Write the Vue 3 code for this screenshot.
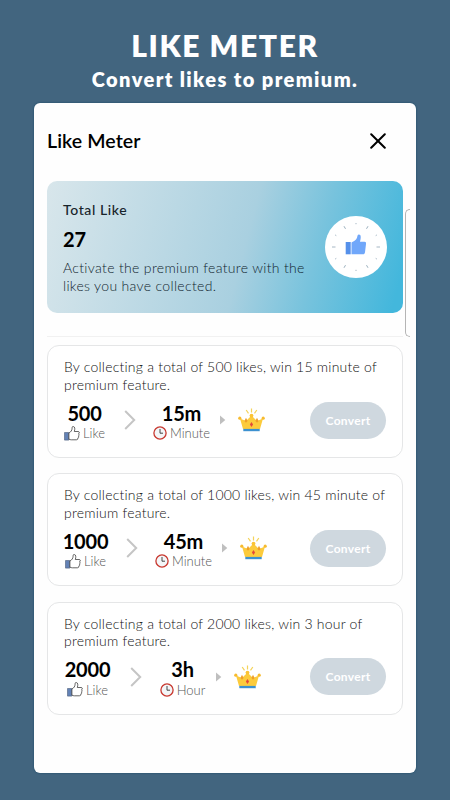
<template>
  <div class="page">
    <header class="headline">
      <h1>LIKE METER</h1>
      <p>Convert likes to premium.</p>
    </header>

    <main class="panel">
      <div class="panel-header">
        <h2>Like Meter</h2>
        <button class="close-btn" aria-label="Close">
          <svg width="16" height="16" viewBox="0 0 16 16">
            <path d="M1.2 1.2 14.8 14.8M14.8 1.2 1.2 14.8" stroke="#000" stroke-width="2" stroke-linecap="round" />
          </svg>
        </button>
      </div>

      <section class="total">
        <div class="total-info">
          <div class="total-label"><span>Total Like</span></div>
          <div class="total-count">27</div>
          <p class="total-text">Activate the premium feature with the<br />likes you have collected.</p>
        </div>
        <svg class="dial" width="62" height="62" viewBox="0 0 62 62">
          <circle cx="31" cy="31" r="31" fill="#fff" />
          <line
            v-for="n in 12"
            :key="n"
            x1="31"
            y1="7"
            x2="31"
            :y2="tickEnd(n)"
            stroke="#8fa5b5"
            stroke-width="0.8"
            :transform="`rotate(${n * 30} 31 31)`"
          />
          <path fill="#5590ea" d="M20.7 26h5v12.3h-5z" />
          <path
            fill="#70a7fa"
            d="M26.5 26.6c2.5-1.3 4.8-2.9 5.5-4.9.5-1.6.4-3.2 1.9-3.2 2.4 0 2.2 3.5 1.1 7.2h4.5c1.3 0 1.7.9 1.5 2.2L40 36.3c-.3 1.4-.8 2-2.1 2H26.5z"
          />
        </svg>
      </section>

      <div class="scroll-edge"></div>
      <div class="divider"></div>

      <section v-for="item in rewards" :key="item.likes" class="reward">
        <p class="reward-text">
          By collecting a total of {{ item.likes }} likes, win {{ item.reward }} of<br />premium feature.
        </p>
        <div class="reward-row">
          <div class="metric" :style="{ width: item.likesWidth + 'px' }">
            <strong>{{ item.likes }}</strong>
            <span class="unit">
              <svg width="16" height="15" viewBox="0 0 16 15">
                <path d="M.5 6.5h4.3v7.6H.5z" fill="#6382b6" stroke="#4b5c7b" stroke-width=".6" />
                <path
                  d="M4.9 7C7 5.9 8 4.4 8.1 2.2 8.1.8 8.5.4 9.3.5c1.7.2 1.8 2.7 1 5h3.8c1.6 0 1.6 2 .4 2.3 1.1.5.8 1.9-.2 2.2.8.7.4 1.8-.6 2 .5 1-.2 1.8-1.4 1.8H7.5c-1 0-1.8-.2-2.6-.7z"
                  fill="#fff"
                  stroke="#333"
                  stroke-width=".75"
                />
              </svg>
              Like
            </span>
          </div>
          <svg class="chevron" width="12" height="20" viewBox="0 0 12 20">
            <path d="M1.2 1 10.2 10 1.2 19" fill="none" stroke="#c5c5c5" stroke-width="2" />
          </svg>
          <div class="metric" :style="{ width: item.timeWidth + 'px' }">
            <strong>{{ item.time }}</strong>
            <span class="unit">
              <svg width="14" height="14" viewBox="0 0 14 14">
                <circle cx="7" cy="7" r="6.1" fill="#f3f6f8" stroke="#c8382f" stroke-width="1.3" />
                <path d="M7 3v4.2h3" fill="none" stroke="#333" stroke-width=".9" />
              </svg>
              {{ item.unit }}
            </span>
          </div>
          <svg class="triangle" width="6" height="10" viewBox="0 0 6 10">
            <path d="M0 .5 5.3 5 0 9.5z" fill="#bfbfbf" />
          </svg>
          <svg class="crown" width="27" height="24" viewBox="0 0 27 24">
            <path d="M13.5.5v4M8.2 2l2.3 3.3M18.8 2l-2.3 3.3" stroke="#f4d35a" stroke-width="1.2" />
            <path d="M2 10.5 8 13 13.5 7.5 19 13 25 10.5 22 21H5z" fill="#fccb3c" />
            <circle cx="1.8" cy="10.2" r="1.6" fill="#f7bb2f" />
            <circle cx="25.2" cy="10.2" r="1.6" fill="#f7bb2f" />
            <circle cx="13.5" cy="7.6" r="1.9" fill="#fbc334" />
            <path d="M8 9.8 9.6 13 8 14.8 6.4 13zM19 9.8 20.6 13 19 14.8 17.4 13z" fill="#ee9f28" />
            <path d="m13.5 14 1.6 2.5-1.6 2.5-1.6-2.5z" fill="#e34a39" />
            <path d="M5.3 20.9h16.4v2.3H5.3z" fill="#3c91d0" />
          </svg>
          <button class="convert-btn">Convert</button>
        </div>
      </section>
    </main>
  </div>
</template>

<script setup>
const rewards = [
  { likes: 500, reward: '15 minute', time: '15m', unit: 'Minute', likesWidth: 41, timeWidth: 57 },
  { likes: 1000, reward: '45 minute', time: '45m', unit: 'Minute', likesWidth: 43, timeWidth: 57 },
  { likes: 2000, reward: '3 hour', time: '3h', unit: 'Hour', likesWidth: 47, timeWidth: 47 }
]

// longer marks next to 12 and 6 o'clock and at 3 and 9
const tickEnd = (n) => {
  if (n === 3 || n === 9) return 10.5
  return [1, 5, 7, 11].includes(n) ? 10 : 8.2
}
</script>

<style>
body {
  margin: 0;
  background: #42657f;
}
</style>

<style scoped>
.page {
  box-sizing: border-box;
  height: 800px;
  padding: 0 34px;
  overflow: hidden;
  background: #42657f;
  font-family: Lato, 'Open Sans', sans-serif;
  color: #000;
}

h1,
h2,
p {
  margin: 0;
}

button {
  padding: 0;
  border: 0;
  font-family: inherit;
}

.headline {
  box-sizing: border-box;
  height: 103px;
  padding-top: 27px;
  color: #fff;
  text-align: center;
  white-space: nowrap;
}

.headline h1 {
  font-size: 30px;
  line-height: 36px;
  font-weight: 800;
  letter-spacing: 1.6px;
}

.headline p {
  padding-top: 3px;
  font-size: 20px;
  line-height: 26px;
  font-weight: 800;
  letter-spacing: 1.4px;
}

.panel {
  position: relative;
  box-sizing: border-box;
  height: 670px;
  padding: 0 13px;
  border-radius: 6px;
  background: #fefefe;
  box-shadow: 0 0 2px #174663;
}

.panel-header {
  display: flex;
  align-items: center;
  justify-content: space-between;
  height: 78px;
  padding-right: 17px;
}

.panel-header h2 {
  margin-top: -2px;
  font-size: 19.5px;
  line-height: 24px;
  font-weight: 600;
  letter-spacing: 0.1px;
}

.close-btn {
  display: flex;
  margin-top: -2px;
  background: none;
}

.total {
  display: flex;
  align-items: center;
  justify-content: space-between;
  box-sizing: border-box;
  height: 132px;
  padding: 0 16px;
  border-radius: 10px;
  background: linear-gradient(105deg, #d8e6eb 0%, #a9d0e0 55%, #78c3dd 74%, #43b7dc 97%);
}

.total-info {
  align-self: flex-start;
  padding-top: 20px;
  white-space: nowrap;
}

.total-label {
  font-size: 14px;
  line-height: 18px;
  font-weight: 500;
  letter-spacing: 0.6px;
  color: #17242b;
}

.total-count {
  padding-top: 7px;
  font-size: 20px;
  line-height: 26px;
  font-weight: 700;
}

.total-text {
  padding-top: 7px;
  font-size: 14px;
  line-height: 17.5px;
  font-weight: 300;
  letter-spacing: 0.33px;
  color: #10242e;
}

.dial {
  flex: none;
}

/* outline of the sheet peeking out on the right */
.scroll-edge {
  position: absolute;
  top: 106px;
  right: 6px;
  width: 4px;
  height: 126px;
  border: 1px solid #b5b5b5;
  border-right: 0;
  border-radius: 6px 0 0 6px;
}

.divider {
  height: 1px;
  margin: 23px 0 8px;
  background: #f1f1f1;
}

.reward {
  box-sizing: border-box;
  height: 113px;
  margin-bottom: 15.3px;
  padding: 12px 16px 0;
  border: 1px solid #e5e6e7;
  border-radius: 12px;
  background: #fff;
}

.reward-text {
  font-size: 14px;
  line-height: 17.5px;
  font-weight: 300;
  letter-spacing: 0.22px;
  color: #111;
  white-space: nowrap;
}

.reward-row {
  display: flex;
  align-items: center;
  height: 50px;
  padding-top: 2px;
}

.metric {
  display: flex;
  flex: none;
  flex-direction: column;
  align-items: center;
  margin-top: 2px;
  white-space: nowrap;
}

.metric strong {
  font-size: 20px;
  line-height: 24px;
  font-weight: 700;
  letter-spacing: -0.2px;
}

.unit {
  display: flex;
  align-items: center;
  gap: 3px;
  height: 17px;
  font-size: 13px;
  font-weight: 300;
  color: #555;
}

.chevron {
  flex: none;
  margin: 0 17px 0 19px;
}

.triangle {
  flex: none;
  margin: 0 12px 0 10px;
}

.crown {
  flex: none;
}

.convert-btn {
  width: 76px;
  height: 37px;
  margin-left: auto;
  border-radius: 19px;
  background: #cfd8df;
  color: #fff;
  font-size: 12px;
  font-weight: 700;
  letter-spacing: 0.3px;
}
</style>
